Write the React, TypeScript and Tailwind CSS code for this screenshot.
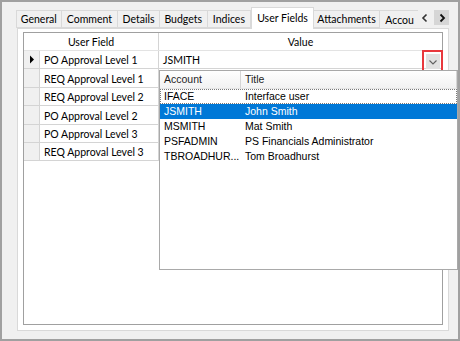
import React from "react";

const tabs = [
  { label: "General", w: 46 },
  { label: "Comment", w: 57 },
  { label: "Details", w: 42 },
  { label: "Budgets", w: 48 },
  { label: "Indices", w: 44 },
  { label: "User Fields", w: 63, active: true },
  { label: "Attachments", w: 67 },
];

const fields = [
  "PO Approval Level 1",
  "REQ Approval Level 1",
  "REQ Approval Level 2",
  "PO Approval Level 2",
  "PO Approval Level 3",
  "REQ Approval Level 3",
];

const accounts = [
  { account: "IFACE", title: "Interface user" },
  { account: "JSMITH", title: "John Smith" },
  { account: "MSMITH", title: "Mat Smith" },
  { account: "PSFADMIN", title: "PS Financials Administrator" },
  { account: "TBROADHUR...", title: "Tom Broadhurst" },
];

const ui = { fontFamily: "Lato, 'Noto Sans', sans-serif" };
const classic = { fontFamily: "'Liberation Sans', Arial, sans-serif" };

function AccountPopup() {
  return (
    <div
      className="absolute left-[157px] top-[68px] flex h-[200px] w-[299px] flex-col border border-[#a9a9a9] bg-white"
      style={classic}
    >
      <div className="flex h-[18px] shrink-0 border-b border-[#e5e5e5] bg-gradient-to-b from-white to-[#f2f2f2] text-[10.5px] text-[#1e1e1e]">
        <div className="flex w-[81px] items-center border-r border-[#d5d5d5] pl-[4px]">Account</div>
        <div className="flex flex-1 items-center border-r border-[#d5d5d5] pl-[4px]">Title</div>
      </div>
      {accounts.map((a, i) => (
        <div
          key={a.account}
          className={
            "flex h-[15px] items-center text-[10.5px] " +
            (i === 1
              ? "bg-[#0078d7] text-white"
              : i === 0
                ? "border border-dotted border-[#7a7a7a] text-black"
                : "text-black")
          }
        >
          <div className={i === 0 ? "w-[80px] pl-[3px]" : "w-[81px] pl-[4px]"}>{a.account}</div>
          <div className="flex-1 pl-[4px]">{a.title}</div>
        </div>
      ))}
    </div>
  );
}

export default function App() {
  return (
    <div
      className="relative flex h-[341px] w-[460px] flex-col border-2 border-[#a0a0a0] bg-[#f0f0f0] pb-[8px] pl-[15px] pr-[9px] pt-[5px] text-black"
      style={ui}
    >
      {/* tab strip */}
      <div className="relative z-10 -ml-px flex h-[21px] items-end text-[10.5px]">
        {tabs.map((t) =>
          t.active ? (
            <div
              key={t.label}
              className="-mb-px flex h-[22px] items-center justify-center border border-b-0 border-[#d9d9d9] bg-white pt-[1px]"
              style={{ width: t.w }}
            >
              {t.label}
            </div>
          ) : (
            <div
              key={t.label}
              className="flex h-[18px] items-center justify-center border border-l-0 border-[#d9d9d9] bg-[#f0f0f0] pt-[2px] first:border-l"
              style={{ width: t.w }}
            >
              {t.label}
            </div>
          ),
        )}
        <div className="flex h-[18px] w-[38px] items-center overflow-hidden border-t border-[#d9d9d9] pl-[5px] pt-[2px]">
          <span className="whitespace-nowrap">Accou</span>
        </div>
        <div className="mb-[3px] flex h-[15px] items-center gap-[2px]">
          <svg width="14" height="14" viewBox="0 0 14 14">
            <polyline points="8.5,3.5 5,7 8.5,10.5" fill="none" stroke="#333" strokeWidth="1.6" />
          </svg>
          <div className="flex h-[15px] w-[15px] items-center justify-center bg-[#d6d6d6]">
            <svg width="14" height="14" viewBox="0 0 14 14">
              <polyline points="5.5,3.5 9,7 5.5,10.5" fill="none" stroke="#111" strokeWidth="1.8" />
            </svg>
          </div>
        </div>
      </div>

      {/* tab page */}
      <div className="flex flex-1 flex-col border border-[#d9d9d9] bg-white px-[5px] pb-[5px] pt-[3px]">
        <div className="relative flex-1 border border-[#a0a0a0] bg-white text-[10.5px]">
          <div className="flex h-[18px] border-b border-[#e3e3e3]">
            <div className="flex w-[135px] items-center justify-center border-r border-[#d4d4d4] pt-[3px]">User Field</div>
            <div className="flex flex-1 items-center justify-center pt-[3px]">Value</div>
          </div>
          {fields.map((f, i) => (
            <div key={f} className="flex h-[18.4px] border-b border-[#d4d4d4]">
              <div className="flex w-[16px] items-center justify-center border-r border-[#d4d4d4] bg-[#f0f0f0]">
                {i === 0 && (
                  <svg width="6" height="9" viewBox="0 0 6 9">
                    <polygon points="1,0.5 5,4.5 1,8.5" fill="#000" />
                  </svg>
                )}
              </div>
              <div className="flex w-[119px] items-center border-r border-[#d4d4d4] pl-[4px] pt-[3px]">{f}</div>
              <div className="flex flex-1 items-center pl-[4px] pt-[3px]">{i === 0 ? "JSMITH" : ""}</div>
            </div>
          ))}

          {/* dropdown button with highlight */}
          <div className="absolute left-[398px] top-[17px] flex h-[23px] w-[21px] items-center justify-center border-2 border-[#e8383d]">
            <div className="flex h-[15px] w-[14px] items-center justify-center bg-[#e1e1e1]">
              <svg width="10" height="8" viewBox="0 0 10 8">
                <polyline points="1.5,2.5 5,6 8.5,2.5" fill="none" stroke="#606060" strokeWidth="1.1" />
              </svg>
            </div>
          </div>
        </div>
      </div>

      <AccountPopup />
    </div>
  );
}
